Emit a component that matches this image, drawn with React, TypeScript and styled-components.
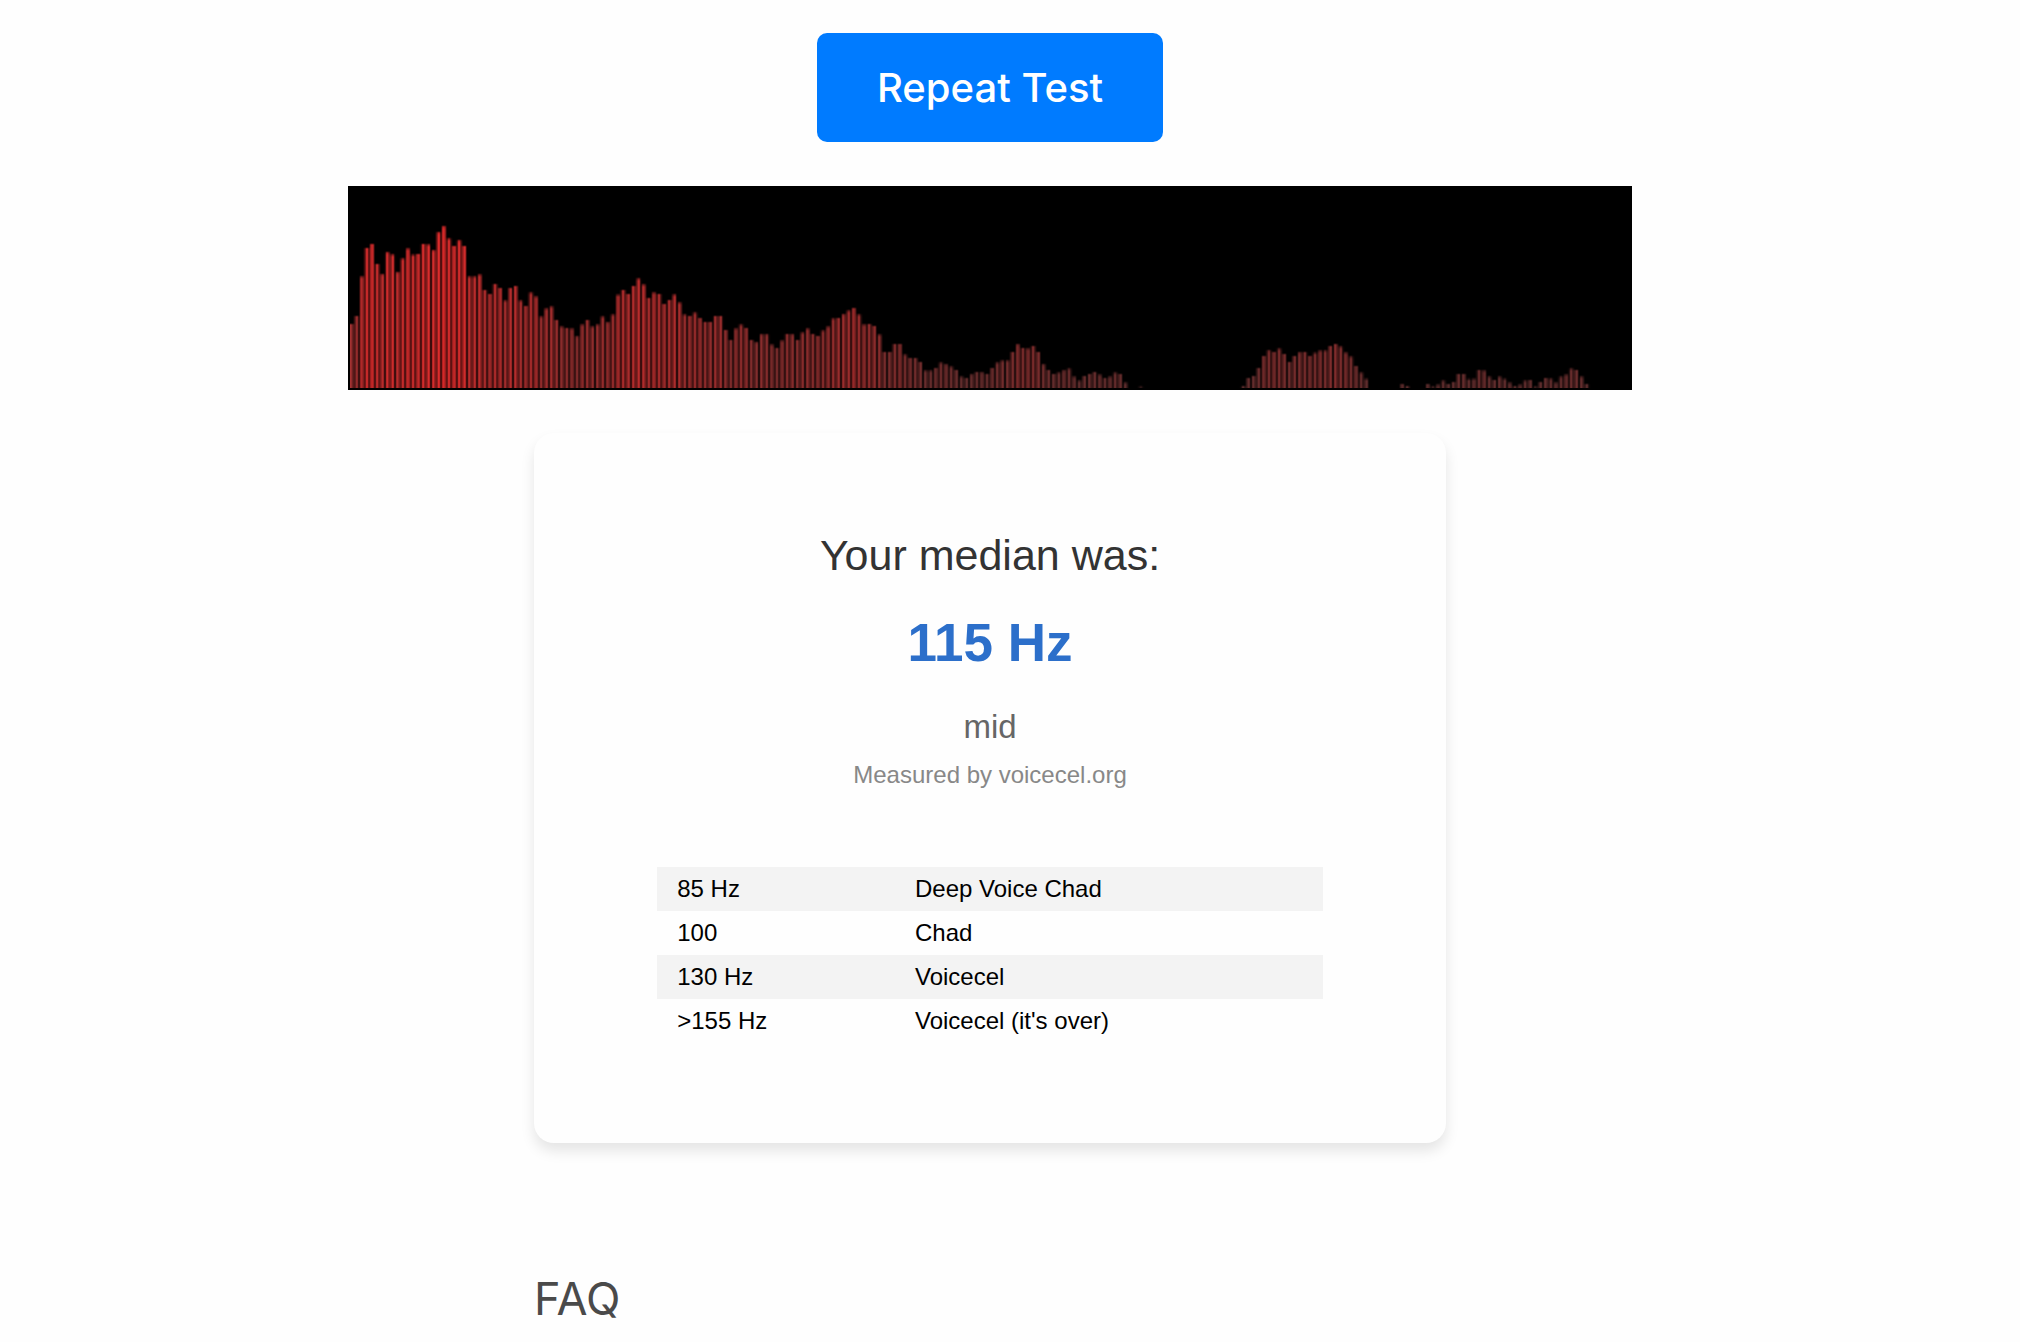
import React, { useEffect, useRef } from "react";
import styled, { createGlobalStyle } from "styled-components";

const GlobalStyle = createGlobalStyle`
  *, *::before, *::after {
    box-sizing: border-box;
  }

  body {
    margin: 0;
    background: #fefefe;
    font-family: Inter, "Open Sans", sans-serif;
  }
`;

const Page = styled.main`
  display: flex;
  flex-direction: column;
  align-items: center;
  padding: 33px 40px 0 0;
`;

const RepeatButton = styled.button`
  padding: 30px 60px;
  border: 0;
  border-radius: 10px;
  background: #007bff;
  color: #fff;
  font-family: inherit;
  font-size: 40px;
  font-weight: 500;
  line-height: 49px;
  cursor: pointer;
`;

const Spectrum = styled.canvas`
  display: block;
  width: 1284px;
  max-width: 100%;
  margin-top: 44px;
  border: 2px solid #000;
  background: #000;
`;

const Column = styled.div`
  width: 912px;
  max-width: 100%;
`;

const Card = styled.section`
  display: flex;
  flex-direction: column;
  align-items: center;
  margin-top: 43px;
  padding: 97px 40px 100px;
  border-radius: 20px;
  background: #fefefe;
  box-shadow: 0 8px 14px rgba(0, 0, 0, 0.1);
  font-family: "Liberation Sans", Arial, sans-serif;
`;

const CardTitle = styled.h2`
  margin: 0;
  color: #333;
  font-size: 43px;
  font-weight: 400;
  line-height: 50px;
`;

const Frequency = styled.p`
  margin: 32px 0 0;
  color: #2c6fca;
  font-size: 53px;
  font-weight: 700;
  line-height: 62px;
`;

const Verdict = styled.p`
  margin: 34px 0 0;
  color: #666;
  font-size: 33px;
  line-height: 38px;
`;

const Source = styled.p`
  margin: 15px 0 0;
  color: #888;
  font-size: 24px;
  line-height: 28px;
`;

const Scale = styled.table`
  width: 80%;
  margin-top: 78px;
  border-collapse: collapse;
  color: #000;
  font-size: 24px;
  line-height: 28px;
`;

const ScaleRow = styled.tr`
  &:nth-child(odd) {
    background: #f3f3f3;
  }
`;

const ScaleCell = styled.td`
  padding: 8px 20px;
  text-align: left;
`;

const FaqTitle = styled.h2`
  margin: 128px 0 0;
  color: #4a4a4a;
  font-size: 45px;
  font-weight: 400;
  line-height: 56px;
`;

const CANVAS_WIDTH = 640;
const CANVAS_HEIGHT = 100;
const BAR_WIDTH = (CANVAS_WIDTH / 1024) * 2.5;

// Six units per canvas pixel of bar height, one entry per frequency bin.
const levels: number[] = [
  192, 216, 334, 420, 432, 372, 341, 407, 400, 347, 388, 418, 399, 402, 432, 430, 413, 467, 485, 448,
  426, 443, 426, 334, 334, 340, 294, 282, 312, 300, 262, 300, 306, 262, 246, 286, 274, 214, 238, 244,
  204, 184, 180, 178, 155, 190, 204, 184, 190, 214, 197, 220, 279, 294, 282, 306, 328, 310, 270, 286,
  282, 252, 264, 280, 256, 220, 216, 226, 210, 198, 198, 216, 216, 174, 144, 178, 190, 180, 144, 137,
  161, 161, 130, 120, 142, 162, 161, 144, 166, 178, 162, 156, 172, 184, 208, 210, 221, 232, 240, 220,
  190, 192, 186, 160, 108, 108, 132, 132, 100, 90, 90, 78, 52, 52, 60, 76, 71, 64, 54, 34,
  30, 41, 48, 47, 42, 60, 76, 82, 82, 108, 131, 120, 118, 126, 108, 71, 54, 42, 46, 53,
  58, 34, 22, 36, 42, 48, 40, 30, 34, 46, 42, 16, 0, 0, 3, 0, 0, 0, 0, 0,
  0, 0, 0, 0, 0, 0, 0, 0, 0, 0, 0, 0, 0, 0, 6, 30, 36, 60, 96, 113,
  108, 118, 102, 78, 96, 107, 108, 96, 105, 112, 112, 126, 132, 124, 106, 94, 66, 46, 27, 0,
  0, 0, 0, 0, 0, 12, 6, 0, 0, 0, 12, 4, 10, 22, 12, 18, 42, 42, 26, 27,
  54, 52, 34, 24, 34, 27, 16, 6, 10, 22, 24, 4, 18, 30, 28, 16, 34, 40, 58, 54,
  34, 12,
];

const ranges = [
  { frequency: "85 Hz", label: "Deep Voice Chad" },
  { frequency: "100", label: "Chad" },
  { frequency: "130 Hz", label: "Voicecel" },
  { frequency: ">155 Hz", label: "Voicecel (it's over)" },
];

function SpectrumChart() {
  const ref = useRef<HTMLCanvasElement>(null);

  useEffect(() => {
    const ctx = ref.current?.getContext("2d");
    if (!ctx) return;
    ctx.fillStyle = "#000";
    ctx.fillRect(0, 0, CANVAS_WIDTH, CANVAS_HEIGHT);
    levels.forEach((level, i) => {
      const height = level / 6;
      ctx.fillStyle = `rgb(${Math.min(255, Math.floor(height * 2 + 100))}, 50, 50)`;
      ctx.fillRect(i * (BAR_WIDTH + 1), CANVAS_HEIGHT - height, BAR_WIDTH, height);
    });
  }, []);

  return (
    <Spectrum
      ref={ref}
      width={CANVAS_WIDTH}
      height={CANVAS_HEIGHT}
      role="img"
      aria-label="Voice frequency spectrum"
    />
  );
}

export default function App() {
  return (
    <>
      <GlobalStyle />
      <Page>
        <RepeatButton type="button">Repeat Test</RepeatButton>
        <SpectrumChart />
        <Column>
          <Card>
            <CardTitle>Your median was:</CardTitle>
            <Frequency>115 Hz</Frequency>
            <Verdict>mid</Verdict>
            <Source>Measured by voicecel.org</Source>
            <Scale>
              <tbody>
                {ranges.map((range) => (
                  <ScaleRow key={range.frequency}>
                    <ScaleCell>{range.frequency}</ScaleCell>
                    <ScaleCell>{range.label}</ScaleCell>
                  </ScaleRow>
                ))}
              </tbody>
            </Scale>
          </Card>
          <FaqTitle>FAQ</FaqTitle>
        </Column>
      </Page>
    </>
  );
}
